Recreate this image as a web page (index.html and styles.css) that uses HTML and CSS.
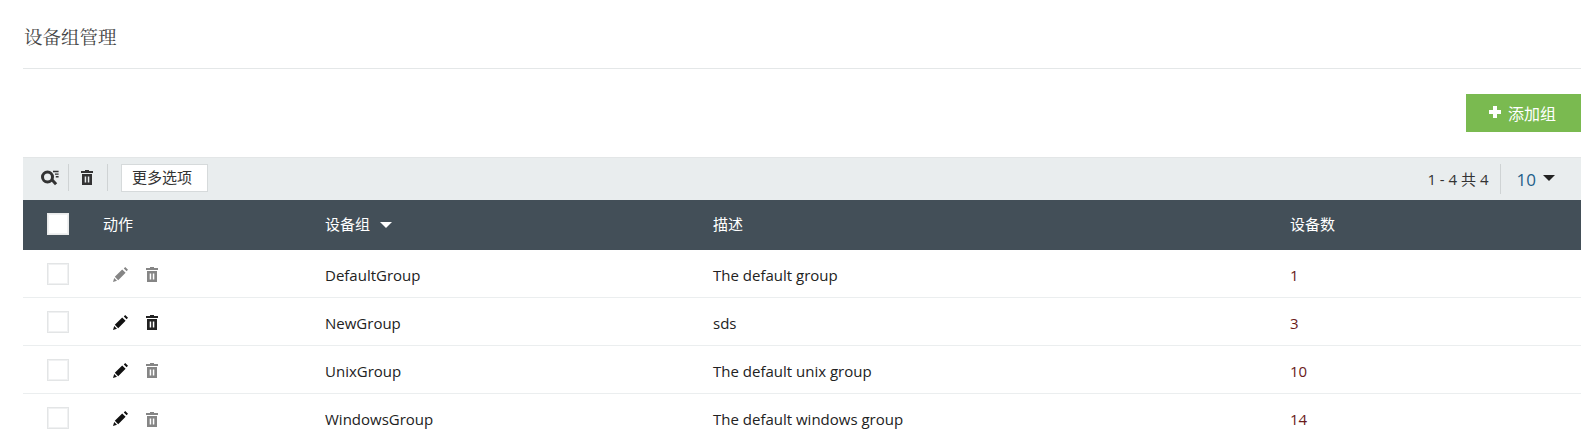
FILE: index.html
```html
<!DOCTYPE html>
<html lang="zh">
<head>
<meta charset="utf-8">
<title>设备组管理</title>
<link rel="stylesheet" href="styles.css">
</head>
<body>
<svg class="defs" width="0" height="0" aria-hidden="true">
  <symbol id="trash" viewBox="0 0 12 15">
    <path d="M4 0h4v1h4v2H0V1h4zM1 4h10v11H1zM3.7 6.5v6h1.5v-6zM6.8 6.5v6h1.5v-6z" fill-rule="evenodd"/>
  </symbol>
  <symbol id="pencil" viewBox="0 0 15 15">
    <path d="M10.8 1.4l1.4-1.4 2.8 2.8-1.4 1.4zM9.2 2.4l3.4 3.4-7.4 7.4-3.4-3.4zM1.2 11l2.8 2.8-4 1.2z"/>
  </symbol>
</svg>
<main class="page">
  <h1 class="title">设备组管理</h1>
  <div class="actions">
    <button class="add-btn"><svg class="plus" viewBox="0 0 12 12"><path d="M4 0h4v4h4v4H8v4H4V8H0V4h4z"/></svg>添加组</button>
  </div>
  <div class="toolbar">
    <div class="tool-left">
      <span class="tool-icon sep">
        <svg class="search" viewBox="0 0 18 16"><circle cx="6.5" cy="7" r="5" fill="none" stroke="#333" stroke-width="3"/><path d="M9.6 10.4l2.2-1.8 4.4 4.6-2.2 2z" fill="#333"/><path d="M12 .8h5.6v1.4H12zM14 3.4h3.6v1.4H14zM14.8 6h2.8v1.4h-2.8z" fill="#333"/></svg>
      </span>
      <span class="tool-icon sep">
        <svg class="tool-trash"><use href="#trash"/></svg>
      </span>
      <button class="more">更多选项</button>
    </div>
    <div class="tool-right">
      <span class="count">1 - 4 共 4</span>
      <span class="page-size">10<i class="caret dark"></i></span>
    </div>
  </div>
  <div class="row head">
    <div class="cell-check"><span class="check solid"></span></div>
    <div class="head-label">动作</div>
    <div class="col-name head-label">设备组<i class="caret light"></i></div>
    <div class="head-label">描述</div>
    <div class="head-label">设备数</div>
  </div>
  <div class="row body">
    <div class="cell-check"><span class="check"></span></div>
    <div class="ops"><svg class="ic-pencil muted"><use href="#pencil"/></svg><svg class="ic-trash muted"><use href="#trash"/></svg></div>
    <div class="col-name">DefaultGroup</div><div>The default group</div><div class="num">1</div>
  </div>
  <div class="row body">
    <div class="cell-check"><span class="check"></span></div>
    <div class="ops"><svg class="ic-pencil"><use href="#pencil"/></svg><svg class="ic-trash"><use href="#trash"/></svg></div>
    <div class="col-name">NewGroup</div><div>sds</div><div class="num">3</div>
  </div>
  <div class="row body">
    <div class="cell-check"><span class="check"></span></div>
    <div class="ops"><svg class="ic-pencil"><use href="#pencil"/></svg><svg class="ic-trash muted"><use href="#trash"/></svg></div>
    <div class="col-name">UnixGroup</div><div>The default unix group</div><div class="num">10</div>
  </div>
  <div class="row body last">
    <div class="cell-check"><span class="check"></span></div>
    <div class="ops"><svg class="ic-pencil"><use href="#pencil"/></svg><svg class="ic-trash muted"><use href="#trash"/></svg></div>
    <div class="col-name">WindowsGroup</div><div>The default windows group</div><div class="num">14</div>
  </div>
</main>
</body>
</html>
```
FILE: styles.css
```css
* { box-sizing: border-box; }
html, body { margin: 0; height: 440px; overflow: hidden; background: #fff; }
body { font-family: "Open Sans", "Noto Sans CJK SC", sans-serif; font-size: 15px; color: #222; }
.defs { position: absolute; }
.page { margin: 0 8px 0 23px; }
.title {
  margin: 0; height: 69px; padding: 25px 0 0 1px;
  border-bottom: 1px solid #e4e7e8;
  font: 400 18.5px/26px "Liberation Serif", "Noto Serif CJK SC", serif;
  color: #444;
}
.actions { display: flex; justify-content: flex-end; padding-top: 25px; height: 88px; }
.add-btn {
  width: 115px; height: 38px; border: 0; background: #7aba50; color: #fff;
  font: 16px "Open Sans", "Noto Sans CJK SC", sans-serif;
  display: flex; align-items: center; justify-content: center; padding: 0 2px 0 0;
}
.plus { width: 12px; height: 12px; fill: #fff; margin: -3px 7px 0 0; }
.toolbar {
  height: 43px; background: #e9edee; border-top: 1px solid #e3e6e7;
  display: flex; justify-content: space-between; align-items: center;
}
.tool-left { display: flex; align-items: center; padding-left: 18px; }
.tool-icon { display: flex; align-items: center; height: 27px; margin-top: -3px; }
.sep { border-right: 1px solid #cfd3d4; }
.search { width: 18px; height: 16px; margin-right: 9px; }
.tool-trash { width: 12px; height: 15px; fill: #333; margin: 0 14px 0 12px; }
.more {
  margin-left: 13px; margin-top: -2px; width: 87px; height: 28px; background: #fff;
  border: 1px solid #d6dadb; padding: 0 5px 3px 0; color: #333;
  font: 15px "Noto Sans CJK SC", sans-serif;
}
.tool-right { display: flex; align-items: center; }
.count { font-size: 15px; color: #333; padding-right: 11px; height: 30px; line-height: 30px; border-right: 1px solid #cfd3d4; }
.page-size { font-size: 17px; color: #1d5f8a; padding: 0 26px 0 16px; display: flex; align-items: center; }
.caret { display: inline-block; width: 0; height: 0; border-left: 6px solid transparent; border-right: 6px solid transparent; }
.caret.dark { border-top: 6px solid #222; margin-left: 7px; margin-top: -3px; }
.caret.light { border-top: 6px solid #fff; margin-left: 10px; vertical-align: 2px; }
.row {
  display: grid; grid-template-columns: 80px 223px 387px 577px 1fr;
  align-items: center;
}
.col-name { margin-left: -1px; }
.head { height: 50px; background: #434f58; color: #fff; }
.head-label { margin-top: -3px; }
.body { height: 48px; border-bottom: 1px solid #ebeeef; color: #222; padding-top: 2px; }
.body.last { border-bottom: 0; }
.cell-check { padding-left: 24px; display: flex; margin-top: -2px; }
.check { width: 22px; height: 22px; border: 1px solid #e3e5e6; background: #fff; display: block; box-shadow: inset 0 0 0 1px #f0f1f2; }
.check.solid { border-color: #e9eaea; }
.ops { display: flex; align-items: center; padding-left: 10px; }
.ic-pencil { width: 15px; height: 15px; fill: #111; margin-top: -1px; }
.ic-trash { width: 12px; height: 15px; fill: #222; margin-left: 18px; }
.muted { fill: #858585; }
.num { color: #6a1a1a; }
```
